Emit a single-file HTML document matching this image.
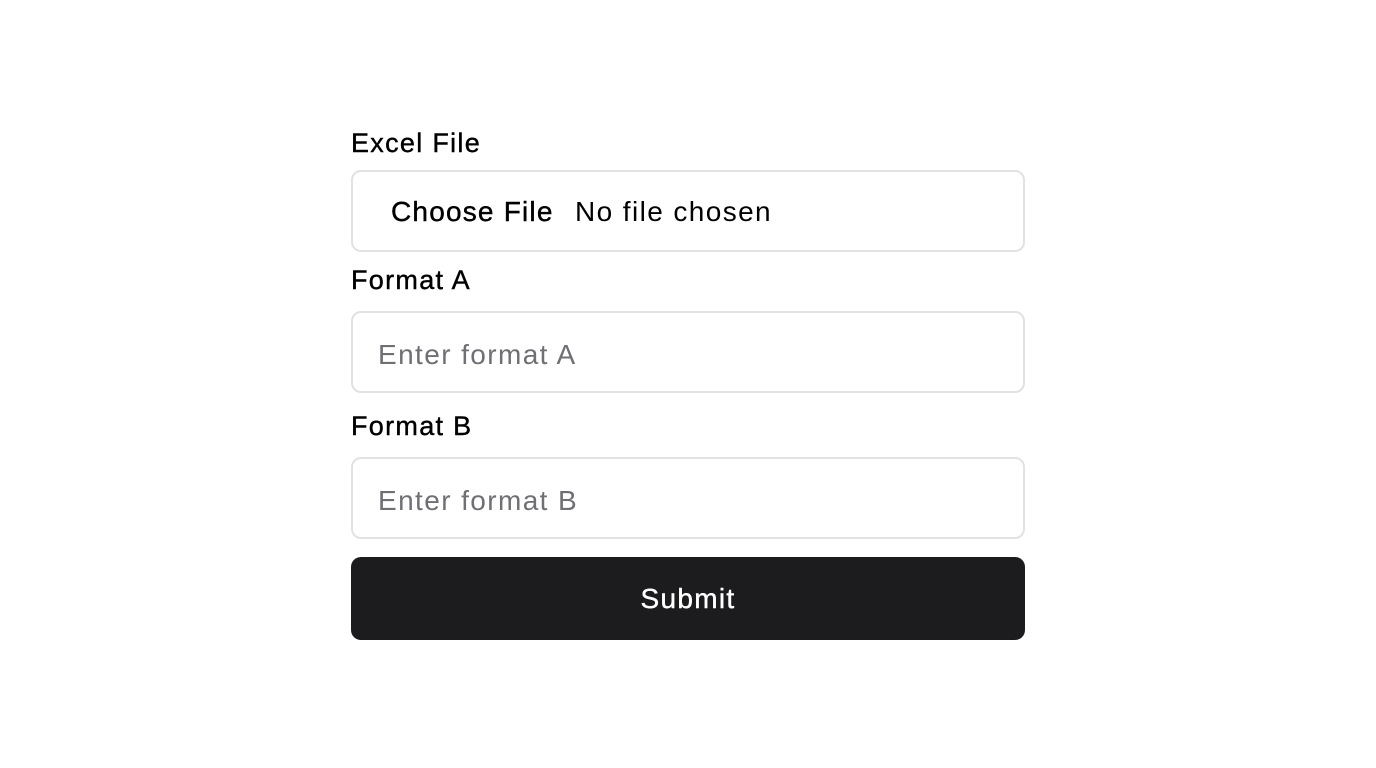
<!DOCTYPE html>
<html><head><style>
html,body{margin:0;padding:0;background:#fff;width:1376px;height:768px;overflow:hidden;font-family:"Liberation Sans",sans-serif;color:#000}
.abs{position:absolute}
.lbl{font-size:27px;left:351px;line-height:30px;letter-spacing:1.3px;-webkit-text-stroke:0.4px #000}
.box{left:351px;width:670px;height:78px;border:2px solid #e2e2e4;border-radius:10px;background:#fff}
.ph{font-size:28px;color:#6f6f74;line-height:30px;letter-spacing:1.4px}
</style></head><body>
<div class="abs lbl" style="top:128px">Excel File</div>
<div class="abs box" style="top:170px"></div>
<div class="abs" style="left:391px;top:197px;font-size:28px;line-height:30px;letter-spacing:1.2px;-webkit-text-stroke:0.4px #000">Choose File</div>
<div class="abs" style="left:575px;top:197px;font-size:28px;line-height:30px;letter-spacing:1.4px">No file chosen</div>
<div class="abs lbl" style="top:265px">Format A</div>
<div class="abs box" style="top:311px"></div>
<div class="abs ph" style="left:378px;top:340px">Enter format A</div>
<div class="abs lbl" style="top:411px">Format B</div>
<div class="abs box" style="top:457px"></div>
<div class="abs ph" style="left:378px;top:486px">Enter format B</div>
<div class="abs" style="left:351px;top:557px;width:674px;height:83px;background:#1c1c1e;border-radius:10px;color:#fff;font-size:28px;letter-spacing:1.3px;-webkit-text-stroke:0.4px #fff;text-align:center;line-height:83px">Submit</div>
</body></html>
